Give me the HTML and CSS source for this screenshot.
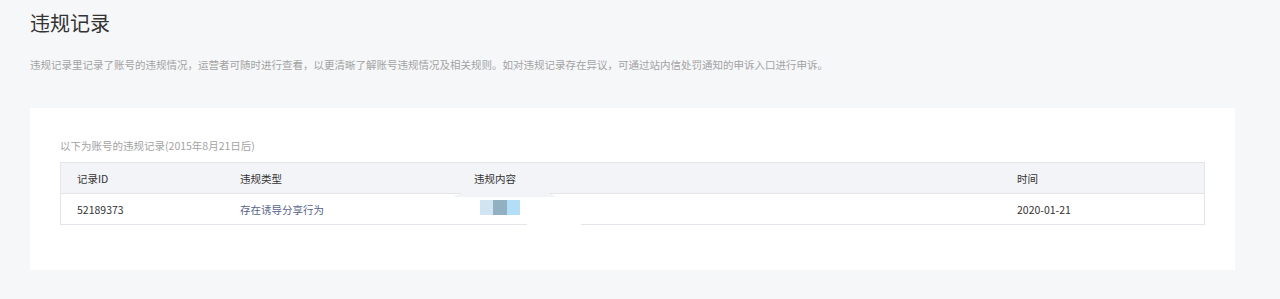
FILE: index.html
```html
<!DOCTYPE html>
<html lang="zh-CN">
<head>
<meta charset="utf-8">
<title>违规记录</title>
<link rel="stylesheet" href="styles.css">
</head>
<body>
<div class="page">
  <h1 class="title">违规记录</h1>
  <p class="desc">违规记录里记录了账号的违规情况，运营者可随时进行查看，以更清晰了解账号违规情况及相关规则。如对违规记录存在异议，可通过站内信处罚通知的申诉入口进行申诉。</p>
  <div class="card">
    <p class="sub">以下为账号的违规记录(2015年8月21日后)</p>
    <div class="table-wrap">
      <table class="records">
        <thead>
          <tr>
            <th class="c1">记录ID</th>
            <th class="c2">违规类型</th>
            <th class="c3">违规内容</th>
            <th class="c4">时间</th>
          </tr>
        </thead>
        <tbody>
          <tr>
            <td>52189373</td>
            <td class="type">存在诱导分享行为</td>
            <td><span class="blur"><i class="b1"></i><i class="b2"></i><i class="b3"></i></span></td>
            <td>2020-01-21</td>
          </tr>
        </tbody>
      </table>
      <span class="smear smear-top"></span>
      <span class="smear smear-bottom"></span>
    </div>
  </div>
</div>
</body>
</html>
```
FILE: styles.css
```css
html, body {
  margin: 0;
  padding: 0;
  background: #f6f7f9;
}
body {
  font-family: "Noto Sans CJK SC", "Liberation Sans", sans-serif;
  color: #333;
}
.page {
  padding: 10px 45px 30px 30px;
}
.title {
  margin: 0;
  font-size: 20px;
  line-height: 26px;
  font-weight: normal;
  color: #333;
}
.desc {
  margin: 19px 0 0;
  font-size: 10.5px;
  line-height: 20px;
  color: #a3a3a3;
}
.card {
  margin-top: 33px;
  background: #fff;
  padding: 28px 30px 45px;
}
.sub {
  margin: 0 0 6px;
  font-size: 10.5px;
  line-height: 20px;
  color: #a3a3a3;
}
.table-wrap {
  position: relative;
}
.records {
  width: 100%;
  border-collapse: collapse;
  border: 1px solid #e4e5ea;
  font-size: 10.5px;
  table-layout: fixed;
}
.records th,
.records td {
  text-align: left;
  padding: 0 0 0 16px;
  height: 30px;
  font-weight: normal;
  color: #333;
  vertical-align: middle;
}
.records thead tr {
  background: #f3f4f8;
  border-bottom: 1px solid #e4e5ea;
}
.c1 { width: 147px; }
.c2 { width: 218px; }
.c3 { width: 527px; }
.records td.type {
  color: #56638a;
}
.blur {
  display: inline-flex;
  margin-left: 6px;
  vertical-align: middle;
  position: relative;
  top: -2px;
}
.blur i {
  display: block;
  height: 15px;
}
.b1 { width: 13px; background: #d0e4f1; }
.b2 { width: 14px; background: #91b0c1; }
.b3 { width: 13px; background: #b3def7; }
.smear {
  position: absolute;
  display: block;
}
.smear-top {
  left: 393px;
  top: 31px;
  width: 104px;
  height: 4px;
  background: #f1f3f7;
  clip-path: polygon(0 100%, 8% 0, 92% 0, 100% 100%);
}
.smear-bottom {
  left: 467px;
  top: 62px;
  width: 54px;
  height: 1px;
  background: #fff;
}
```
